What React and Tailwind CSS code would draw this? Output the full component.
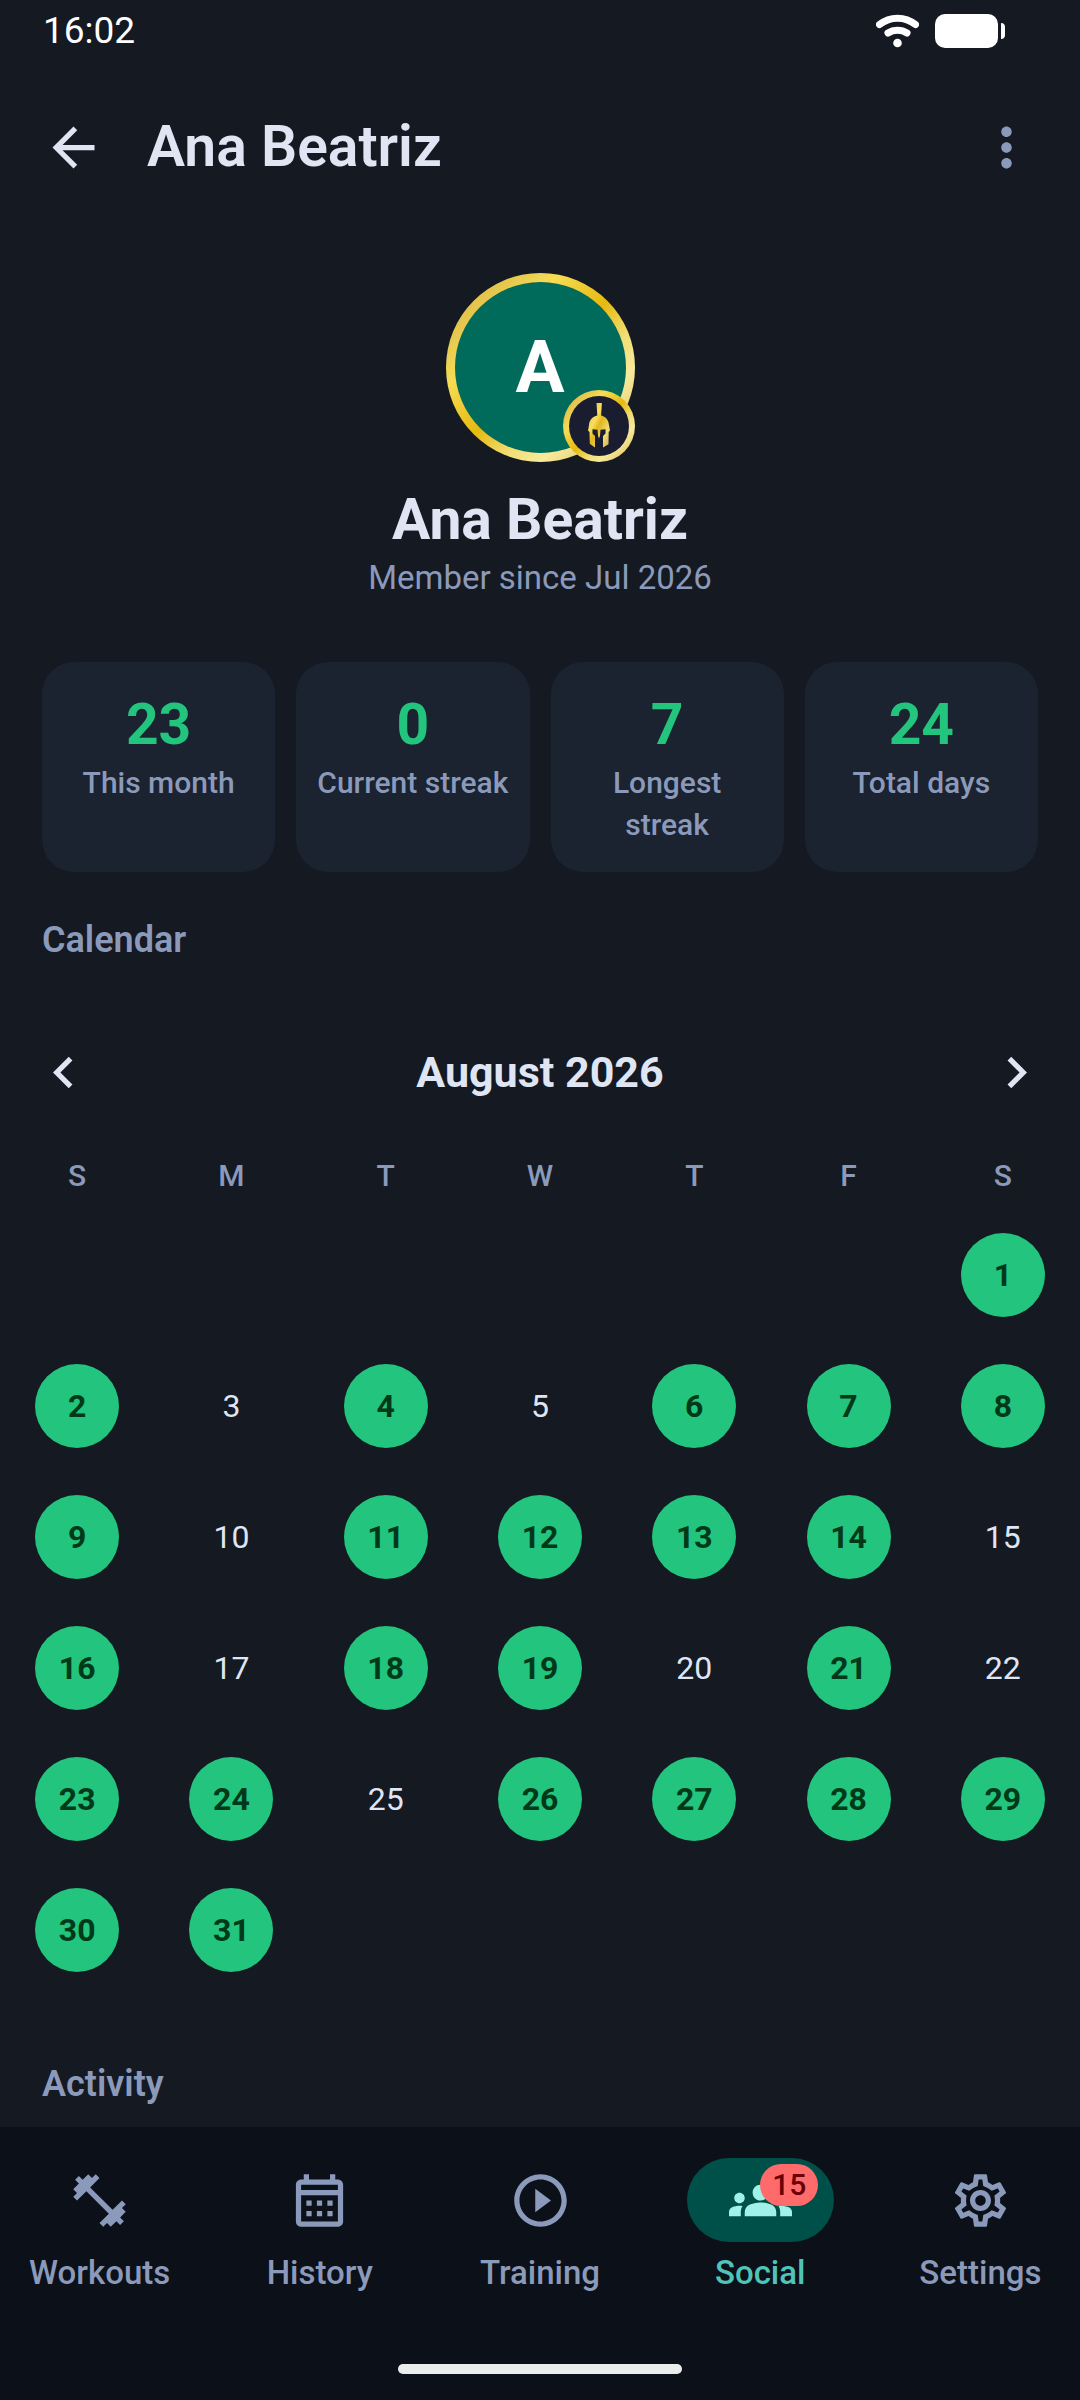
import React, { useState } from 'react';
import {
    MdArrowBack,
    MdMoreVert,
    MdChevronLeft,
    MdChevronRight,
    MdFitnessCenter,
    MdOutlineCalendarMonth,
    MdPlayCircleOutline,
    MdGroups,
    MdOutlineSettings,
} from 'react-icons/md';

const STATS = [
    { value: 23, label: 'This month' },
    { value: 0, label: 'Current streak' },
    { value: 7, label: 'Longest\nstreak' },
    { value: 24, label: 'Total days' },
];

const WEEKDAYS = ['S', 'M', 'T', 'W', 'T', 'F', 'S'];
const REST_DAYS = [3, 5, 10, 15, 17, 20, 22, 25];

// August 2026 starts on a Saturday
const WEEKS = Array.from({ length: 6 }, (_, week) =>
    Array.from({ length: 7 }, (_, i) => {
        const day = week * 7 + i - 5;
        return day >= 1 && day <= 31 ? day : null;
    })
);

const NAV_ITEMS = [
    { name: 'Workouts', Icon: MdFitnessCenter },
    { name: 'History', Icon: MdOutlineCalendarMonth },
    { name: 'Training', Icon: MdPlayCircleOutline },
    { name: 'Social', Icon: MdGroups, badge: 15 },
    { name: 'Settings', Icon: MdOutlineSettings },
];

const GOLD =
    'bg-[linear-gradient(135deg,#e0bd48_10%,#e8ca50_20%,#f6dc55_30%,#e6b90f_50%,#f1de74_64%,#f8ea9c_75%,#e0c462_92%)]';

const StatusBar = () => (
    <div className="h-[62px] pl-[43px] pr-[75px] flex items-center justify-between text-white">
        <span className="text-[37px] leading-[42px]">16:02</span>
        <div className="flex items-center gap-4">
            <svg className="w-[43px] h-[34px]" viewBox="0 0 43 34" fill="none" stroke="currentColor" strokeLinecap="round">
                <path d="M3.5 10.5C14 2 29 2 39.5 10.5" strokeWidth="7" />
                <path d="M12 19C17.500 15.200 25.500 15.200 31 19" strokeWidth="7" />
                <circle cx="21.5" cy="29" r="4.3" fill="currentColor" stroke="none" />
            </svg>
            <svg className="w-[70px] h-[34px]" viewBox="0 0 70 34" fill="currentColor">
                <rect width="63" height="34" rx="10" />
                <path d="M66 9c3 0 4 2 4 4v8c0 2-1 4-4 4z" />
            </svg>
        </div>
    </div>
);

const Avatar = () => (
    <div className={`relative size-[189px] rounded-full p-[9px] ${GOLD}`}>
        <div className="size-full rounded-full bg-[#006b5b] flex items-center justify-center text-[73px] leading-none font-bold text-white">
            A
        </div>
        <div className={`absolute right-0 bottom-0 size-[72px] rounded-full p-[6px] ${GOLD}`}>
            <div className="size-full rounded-full bg-[#1a1d2f]">
                <svg className="size-full" viewBox="6 6 60 60">
                    <defs>
                        <linearGradient id="helmet" x1="0" y1="0" x2="1" y2="1">
                            <stop offset="0.1" stopColor="#e3c04c" />
                            <stop offset="0.35" stopColor="#f8df60" />
                            <stop offset="0.5" stopColor="#e3b61c" />
                            <stop offset="0.75" stopColor="#f3dc78" />
                            <stop offset="1" stopColor="#c9a850" />
                        </linearGradient>
                    </defs>
                    <path
                        fill="url(#helmet)"
                        d="M33.5 13h5.4l-.8 12.6c4.400 1 7.500 4.400 7.900 9.400l1 5.500-1.300 1.500-.2 12.200-5.500 3.300V46l2.500-2.500v-4.300l-5 .6-.5 6-1 2.800-1-2.800-.5-6-5-.6v4.300L32 46v11.500l-5.200-3.800-.3-11.700-1.500-1.500 1-5.500c.4-5 3.600-8.400 8.300-9.400z"
                    />
                </svg>
            </div>
        </div>
    </div>
);

const Calendar = () => (
    <section>
        <div className="mt-[42px] px-8 h-[126px] flex items-center justify-between text-[#dfe5f2]">
            <button type="button" aria-label="Previous month" className="h-full">
                <MdChevronLeft className="size-[63px]" />
            </button>
            <h3 className="text-[43px] leading-[63px] font-bold">August 2026</h3>
            <button type="button" aria-label="Next month" className="h-full">
                <MdChevronRight className="size-[63px]" />
            </button>
        </div>
        <table className="mt-2 w-full table-fixed text-center">
            <thead>
                <tr className="h-[66px] text-[30px] leading-[42px] text-[#8b9aba]">
                    {WEEKDAYS.map((day, i) => (
                        <th key={i} className="p-0 font-medium">{day}</th>
                    ))}
                </tr>
            </thead>
            <tbody>
                {WEEKS.map((week, i) => (
                    <tr key={i} className="h-[131px] text-[32px] leading-[42px]">
                        {week.map((day, j) => (
                            <td key={j} className="p-0">
                                {day && (
                                    <span
                                        className={`mx-auto size-[84px] rounded-full flex items-center justify-center ${
                                            REST_DAYS.includes(day) ? 'text-[#dfe5f2]' : 'bg-[#22c47e] text-[#003919] font-bold'
                                        }`}
                                    >
                                        {day}
                                    </span>
                                )}
                            </td>
                        ))}
                    </tr>
                ))}
            </tbody>
        </table>
    </section>
);

const BottomNav = () => {
    const [active, setActive] = useState('Social');

    return (
        <nav className="bg-[#0c1018] pt-[31px] pb-[26px]">
            <div className="flex gap-[21px]">
                {NAV_ITEMS.map(({ name, Icon, badge }) => (
                    <button
                        key={name}
                        type="button"
                        onClick={() => setActive(name)}
                        className={`flex-1 flex flex-col items-center gap-[10px] ${active === name ? 'text-[#4fc4b7]' : 'text-[#8b9aba]'}`}
                    >
                        <span
                            className={`relative w-[147px] h-[84px] rounded-full flex items-center justify-center ${
                                active === name ? 'bg-[#00504a] text-[#a0f2e8]' : ''
                            }`}
                        >
                            <Icon className="size-[63px]" />
                            {badge && (
                                <span className="absolute left-1/2 top-[6px] h-[42px] px-3 rounded-full bg-[#ff6b6b] text-[#690005] text-[30px] leading-[42px] font-medium">
                                    {badge}
                                </span>
                            )}
                        </span>
                        <span className="text-[33px] leading-[42px] font-medium">{name}</span>
                    </button>
                ))}
            </div>
            <div className="mt-[70px] mx-auto w-[284px] h-[10px] rounded-full bg-[#ebeded]" />
        </nav>
    );
};

const App = () => {
    return (
        <div className="min-h-screen flex flex-col bg-[#141922] font-['Roboto',sans-serif]">
            <StatusBar />
            <header className="h-[170px] px-[42px] flex items-center text-[#dfe5f2]">
                <button type="button" aria-label="Back">
                    <MdArrowBack className="size-[63px]" />
                </button>
                <h1 className="ml-[42px] flex-1 text-[57px] leading-[74px] font-semibold">Ana Beatriz</h1>
                <button type="button" aria-label="More options" className="text-[#8b9aba]">
                    <MdMoreVert className="size-[63px]" />
                </button>
            </header>

            <main className="flex-1">
                <section className="pt-[41px] flex flex-col items-center">
                    <Avatar />
                    <h2 className="mt-[21px] text-[57px] leading-[74px] font-bold text-[#dfe5f2]">Ana Beatriz</h2>
                    <p className="text-[33px] leading-[42px] text-[#8b9aba]">Member since Jul 2026</p>
                </section>

                <section className="mt-[63px] px-[42px] grid grid-cols-4 gap-[21px]">
                    {STATS.map(({ value, label }) => (
                        <div key={label} className="rounded-[32px] bg-[#1b2230] py-[26px] text-center">
                            <p className="text-[57px] leading-[74px] font-bold text-[#22c47e]">{value}</p>
                            <p className="text-[30px] leading-[42px] font-medium text-[#8b9aba] whitespace-pre-line">{label}</p>
                        </div>
                    ))}
                </section>

                <h2 className="mt-[42px] px-[42px] text-[36px] leading-[53px] font-semibold text-[#8b9aba]">Calendar</h2>
                <Calendar />
                <h2 className="mt-[63px] px-[42px] text-[36px] leading-[53px] font-semibold text-[#8b9aba]">Activity</h2>
            </main>

            <BottomNav />
        </div>
    );
};

export default App;
